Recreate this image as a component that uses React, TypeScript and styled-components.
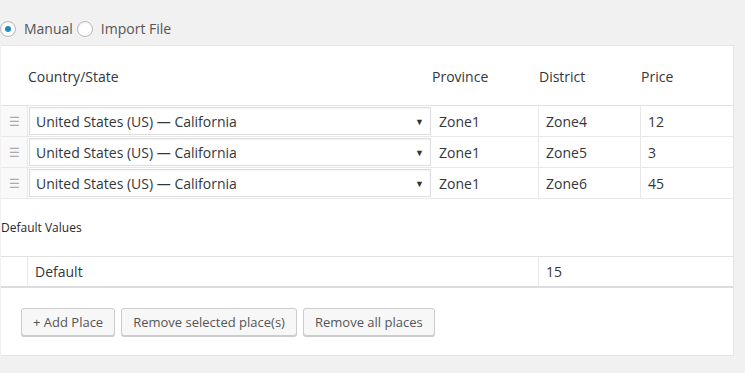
import React from 'react';
import styled, { createGlobalStyle } from 'styled-components';

const GlobalStyle = createGlobalStyle`
  html, body {
    margin: 0;
    padding: 0;
    background: #f1f1f1;
    font-family: 'Open Sans', 'Liberation Sans', sans-serif;
    color: #444;
  }
`;

const Page = styled.div`
  width: 745px;
  height: 373px;
  overflow: hidden;
`;

const ModeRow = styled.div`
  display: flex;
  align-items: center;
  height: 45px;
  padding-top: 12px;
  box-sizing: border-box;
`;

const RadioLabel = styled.label`
  display: flex;
  align-items: center;
  font-size: 14px;
  color: #555;
  margin-right: 4px;
`;

const RadioCircle = styled.span<{ $checked?: boolean }>`
  width: 16px;
  height: 16px;
  box-sizing: border-box;
  border-radius: 50%;
  border: 1px solid #b4b9be;
  background: #fff;
  box-shadow: inset 0 1px 2px rgba(0, 0, 0, 0.07);
  margin-right: 8px;
  display: flex;
  align-items: center;
  justify-content: center;

  &::after {
    content: '';
    display: ${p => (p.$checked ? 'block' : 'none')};
    width: 6px;
    height: 6px;
    border-radius: 50%;
    background: #1e8cbe;
  }
`;

const Panel = styled.div`
  margin-left: 1px;
  width: 733px;
  height: 311px;
  box-sizing: border-box;
  background: #fff;
  border: 1px solid #e5e5e5;
  border-left: none;
`;

const cols = '27px 404px 106px 102px 92px';

const HeadRow = styled.div`
  display: grid;
  grid-template-columns: ${cols};
  height: 60px;
  padding-top: 2px;
  box-sizing: border-box;
  align-items: center;
  font-size: 14px;
  color: #32373c;
  border-bottom: 1px solid #e1e1e1;
`;

const HeadCell = styled.div<{ $indent?: number }>`
  padding-left: ${p => p.$indent ?? 0}px;
`;

const Row = styled.div`
  display: grid;
  grid-template-columns: ${cols};
  height: 31px;
  border-bottom: 1px solid #e8e8e8;
  box-sizing: border-box;
  font-size: 14px;
  color: #32373c;
`;

const Handle = styled.div`
  background: #f9f9f9;
  border-right: 1px solid #e8e8e8;
  display: flex;
  align-items: center;
  justify-content: center;
  color: #aaa;
  font-size: 12px;
`;

const SelectBox = styled.div`
  margin: 1px;
  border: 1px solid #ddd;
  box-shadow: inset 0 1px 2px rgba(0, 0, 0, 0.05);
  display: flex;
  align-items: center;
  justify-content: space-between;
  padding: 0 6px;
`;

const Arrow = styled.span`
  font-size: 9px;
  color: #333;
`;

const Cell = styled.div<{ $border?: boolean }>`
  display: flex;
  align-items: center;
  padding-left: 7px;
  border-left: ${p => (p.$border ? '1px solid #e8e8e8' : 'none')};
`;

const SectionLabel = styled.div`
  font-size: 12px;
  color: #23282d;
  height: 57px;
  display: flex;
  align-items: center;
  padding-left: 1px;
  margin-left: -1px;
`;

const DefaultRow = styled.div`
  display: grid;
  grid-template-columns: 27px 510px 1fr;
  height: 32px;
  border-top: 1px solid #e1e1e1;
  border-bottom: 2px solid #dcdcdc;
  box-sizing: border-box;
  font-size: 14px;
  color: #32373c;
`;

const EmptyCell = styled.div`
  border-right: 1px solid #e8e8e8;
`;

const Footer = styled.div`
  display: flex;
  gap: 6px;
  padding: 20px 0 0 20px;
`;

const Button = styled.button`
  height: 28px;
  padding: 0 11px;
  background: #f7f7f7;
  border: 1px solid #ccc;
  border-radius: 3px;
  box-shadow: 0 1px 0 #ccc;
  color: #555;
  font-family: 'Open Sans', 'Liberation Sans', sans-serif;
  font-size: 13px;
  cursor: pointer;
`;

const places = [
  { province: 'Zone1', district: 'Zone4', price: '12' },
  { province: 'Zone1', district: 'Zone5', price: '3' },
  { province: 'Zone1', district: 'Zone6', price: '45' },
];

export default function App() {
  return (
    <Page>
      <GlobalStyle />
      <ModeRow>
        <RadioLabel>
          <RadioCircle $checked />
          Manual
        </RadioLabel>
        <RadioLabel>
          <RadioCircle />
          Import File
        </RadioLabel>
      </ModeRow>
      <Panel>
        <HeadRow>
          <div />
          <HeadCell>Country/State</HeadCell>
          <HeadCell>Province</HeadCell>
          <HeadCell $indent={1}>District</HeadCell>
          <HeadCell $indent={1}>Price</HeadCell>
        </HeadRow>
        {places.map((p, i) => (
          <Row key={i}>
            <Handle>☰</Handle>
            <SelectBox>
              United States (US) — California
              <Arrow>▼</Arrow>
            </SelectBox>
            <Cell>{p.province}</Cell>
            <Cell $border>{p.district}</Cell>
            <Cell $border>{p.price}</Cell>
          </Row>
        ))}
        <SectionLabel>Default Values</SectionLabel>
        <DefaultRow>
          <EmptyCell />
          <Cell>Default</Cell>
          <Cell $border>15</Cell>
        </DefaultRow>
        <Footer>
          <Button>+ Add Place</Button>
          <Button>Remove selected place(s)</Button>
          <Button>Remove all places</Button>
        </Footer>
      </Panel>
    </Page>
  );
}
